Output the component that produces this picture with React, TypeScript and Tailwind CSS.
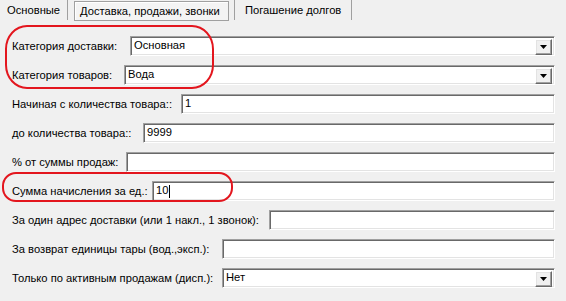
import React from "react";

const sunken =
  "bg-white border border-t-[#a0a0a0] border-l-[#a0a0a0] border-b-white border-r-white shadow-[inset_1px_1px_0_#696969,inset_-1px_-1px_0_#e3e3e3]";

function Field({ label, x, value, combo, cursor }: { label: string; x: number; value?: string; combo?: boolean; cursor?: boolean }) {
  return (
    <div className="flex items-center h-[20px] mb-[9px]">
      <div className="pl-[12px] shrink-0" style={{ width: x }}>
        <span className="whitespace-nowrap">{label}</span>
      </div>
      <div className={`relative flex-1 h-[20px] ${sunken} flex items-center`}>
        <span className="pl-[3px] leading-none flex items-center">
          {value}
          {cursor && <span className="inline-block w-px h-[13px] bg-black ml-px" />}
        </span>
        {combo && (
          <div className="absolute right-[2px] top-[2px] w-[17px] h-[16px] bg-[#f0f0f0] border border-t-white border-l-white border-b-[#696969] border-r-[#696969] shadow-[inset_-1px_-1px_0_#a0a0a0,inset_1px_1px_0_#e3e3e3] flex items-center justify-center">
            <svg width="7" height="4" viewBox="0 0 7 4">
              <path d="M0 0H7L3.5 4Z" fill="#000" />
            </svg>
          </div>
        )}
      </div>
    </div>
  );
}

export default function App() {
  return (
    <div
      className="relative w-[566px] h-[301px] bg-[#f0f0f0] text-black overflow-hidden text-[11.2px]"
      style={{ fontFamily: "'Liberation Sans', 'DejaVu Sans', sans-serif" }}
    >
      {/* tabs */}
      <div className="flex items-start h-[22px]">
        <div className="h-[20px] w-[68px] pl-[7px] flex items-center border-r border-[#a0a0a0]">Основные</div>
        <div className="ml-[6px] h-[20px] w-[155px] border border-[#a0a0a0] bg-[#f4f4f4] shadow-[inset_1px_1px_0_#fff] flex items-center pl-[5px] mt-[1px]">
          Доставка, продажи, звонки
        </div>
        <div className="ml-[5px] h-[20px] w-[118px] pl-[10px] flex items-center border-l border-r border-[#a0a0a0]">
          Погашение долгов
        </div>
      </div>

      <div className="pt-[14px] pr-[11px]">
        <Field label="Категория доставки:" x={130} value="Основная" combo />
        <Field label="Категория товаров:" x={124} value="Вода" combo />
        <Field label="Начиная с количества товара::" x={181} value="1" />
        <Field label="до количества товара::" x={143} value="9999" />
        <Field label="% от суммы продаж:" x={126} value="" />
        <Field label="Сумма начисления за ед.:" x={152} value="10" cursor />
        <Field label="За один адрес доставки (или 1 накл., 1 звонок):" x={269} value="" />
        <Field label="За возврат единицы тары (вод.,эксп.):" x={222} value="" />
        <Field label="Только по активным продажам (дисп.):" x={222} value="Нет" combo />
      </div>

      {/* red annotations */}
      <div className="absolute left-[5px] top-[25px] w-[209px] h-[64px] border-[2.5px] border-[#e3161e] rounded-[22px/24px] pointer-events-none" />
      <div className="absolute left-[2px] top-[172px] w-[231px] h-[30px] border-[2.5px] border-[#e3161e] rounded-[14px] pointer-events-none" />
    </div>
  );
}
